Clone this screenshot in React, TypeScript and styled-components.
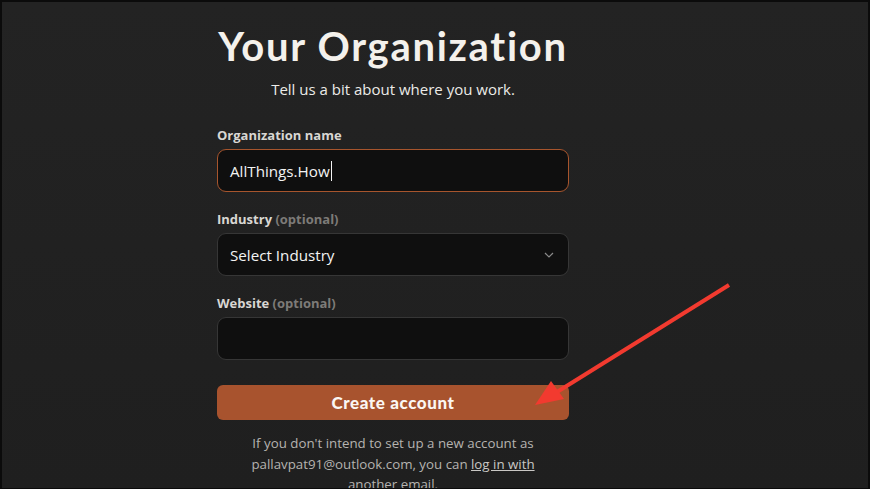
import React from "react";
import styled, { createGlobalStyle } from "styled-components";

const GlobalStyle = createGlobalStyle`
  html, body {
    margin: 0;
    padding: 0;
    background: #0b0b0b;
  }
  * { box-sizing: border-box; }
`;

const Page = styled.div`
  position: relative;
  width: 870px;
  height: 489px;
  overflow: hidden;
  border: 2px solid #0b0b0b;
  border-bottom-width: 1px;
  background: linear-gradient(180deg, #232323 0%, #1f1f1f 100%);
  padding: 21px 0 0 215px;
  font-family: "Open Sans", "Noto Sans", sans-serif;
`;

const Column = styled.div`
  width: 352px;
  display: flex;
  flex-direction: column;
`;

const Title = styled.h1`
  margin: 0 -20px;
  white-space: nowrap;
  text-align: center;
  font-family: Lato, "Noto Sans", sans-serif;
  font-weight: 700;
  font-size: 40px;
  line-height: 47px;
  letter-spacing: 1.7px;
  color: #f4f1ec;
`;

const Subtitle = styled.p`
  margin: 8px 0 0;
  text-align: center;
  font-size: 15px;
  line-height: 22px;
  color: #ecebe8;
`;

const Field = styled.div<{ $first?: boolean }>`
  display: flex;
  flex-direction: column;
  gap: 5px;
  margin-top: ${(p) => (p.$first ? "26px" : "18px")};
`;

const Label = styled.label`
  font-size: 13px;
  line-height: 18px;
  font-weight: 700;
  color: #d9d7d3;
`;

const Optional = styled.span`
  color: #7d7b78;
`;

const Box = styled.div<{ $focus?: boolean }>`
  height: 43px;
  border-radius: 9px;
  border: 1px solid ${(p) => (p.$focus ? "#a7552d" : "#363636")};
  background: #0f0f0f;
  display: flex;
  align-items: center;
  justify-content: space-between;
  padding: 0 14px 0 12px;
  font-size: 15.2px;
  color: #f3f3f3;
`;

const Value = styled.span`
  display: flex;
  align-items: center;
`;

const Caret = styled.span`
  display: inline-block;
  width: 1px;
  height: 20px;
  background: #f3f3f3;
  margin-left: 1px;
`;

const Button = styled.button`
  margin-top: 25px;
  height: 35px;
  border: none;
  border-radius: 6px;
  background: #a8532e;
  color: #fbf7f3;
  font-family: Lato, "Noto Sans", sans-serif;
  font-weight: 900;
  font-size: 17px;
  letter-spacing: 0.6px;
  cursor: pointer;
`;

const Note = styled.p`
  margin: 13px 0 0;
  padding: 0 28px;
  text-align: center;
  font-size: 13.3px;
  line-height: 20.5px;
  color: #b5b3b0;
`;

const Link = styled.a`
  color: #c9c7c4;
  text-decoration: underline;
`;

const Annotation = styled.svg`
  position: absolute;
  left: 0;
  top: 0;
  pointer-events: none;
`;

export default function App() {
  return (
    <>
      <GlobalStyle />
      <Page>
        <Column>
          <Title>Your Organization</Title>
          <Subtitle>Tell us a bit about where you work.</Subtitle>

          <Field $first>
            <Label>Organization name</Label>
            <Box $focus>
              <Value>
                AllThings.How
                <Caret />
              </Value>
            </Box>
          </Field>

          <Field>
            <Label>
              Industry <Optional>(optional)</Optional>
            </Label>
            <Box>
              <Value>Select Industry</Value>
              <svg width="10" height="6" viewBox="0 0 10 6">
                <path d="M1 1l4 4 4-4" fill="none" stroke="#8a8a8a" strokeWidth="1.2" />
              </svg>
            </Box>
          </Field>

          <Field>
            <Label>
              Website <Optional>(optional)</Optional>
            </Label>
            <Box />
          </Field>

          <Button>Create account</Button>

          <Note>
            If you don't intend to set up a new account as pallavpat91@outlook.com, you can{" "}
            <Link>log in with</Link> another email.
          </Note>
        </Column>

        <Annotation width="870" height="489" viewBox="0 0 870 489">
          <line x1="727" y1="283" x2="555" y2="390" stroke="#f23a2f" strokeWidth="4" />
          <polygon points="533,403 549,379 562,397" fill="#f23a2f" />
        </Annotation>
      </Page>
    </>
  );
}
